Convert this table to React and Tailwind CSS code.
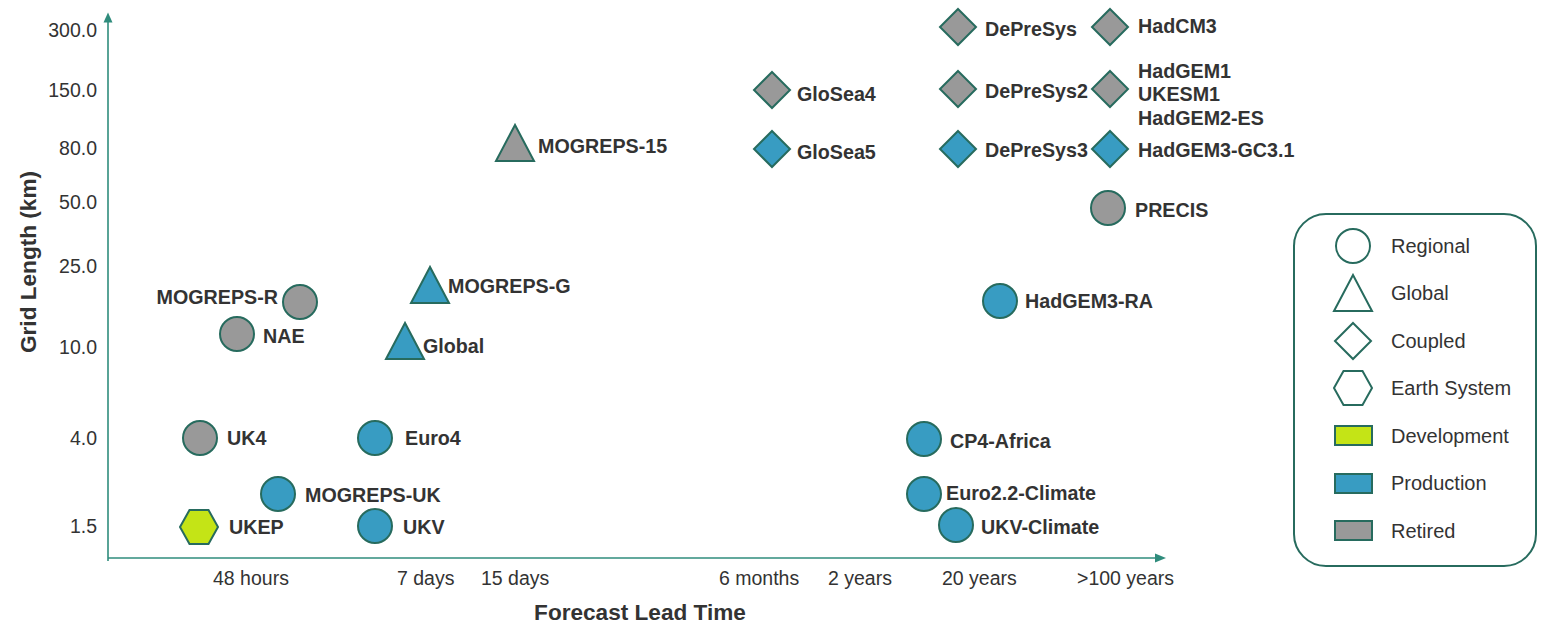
import React from 'react'

const STROKE = '#276b5e'
const AXIS = '#2f8c7c'
const FILL = {
  dev: '#c4e416',
  prod: '#389cc2',
  ret: '#999999',
}

// chart markers: shape, fill, centre
const markers = [
  { s: 'circle', f: 'ret', x: 300, y: 302 },
  { s: 'circle', f: 'ret', x: 237, y: 334 },
  { s: 'circle', f: 'ret', x: 200, y: 438 },
  { s: 'circle', f: 'prod', x: 375, y: 438 },
  { s: 'circle', f: 'prod', x: 278, y: 494 },
  { s: 'hex', f: 'dev', x: 199, y: 527 },
  { s: 'circle', f: 'prod', x: 375, y: 526 },
  { s: 'tri', f: 'prod', x: 405, y: 341 },
  { s: 'tri', f: 'prod', x: 430, y: 285 },
  { s: 'tri', f: 'ret', x: 515, y: 143 },
  { s: 'diamond', f: 'ret', x: 772, y: 90 },
  { s: 'diamond', f: 'prod', x: 772, y: 149 },
  { s: 'diamond', f: 'ret', x: 958, y: 27 },
  { s: 'diamond', f: 'ret', x: 958, y: 89 },
  { s: 'diamond', f: 'prod', x: 958, y: 149 },
  { s: 'diamond', f: 'ret', x: 1110, y: 27 },
  { s: 'diamond', f: 'ret', x: 1110, y: 89 },
  { s: 'diamond', f: 'prod', x: 1110, y: 149 },
  { s: 'circle', f: 'ret', x: 1108, y: 208 },
  { s: 'circle', f: 'prod', x: 1000, y: 301 },
  { s: 'circle', f: 'prod', x: 924, y: 439 },
  { s: 'circle', f: 'prod', x: 924, y: 494 },
  { s: 'circle', f: 'prod', x: 956, y: 525 },
]

const labels = [
  { t: 'MOGREPS-R', x: 278, y: 304, end: true },
  { t: 'NAE', x: 263, y: 343 },
  { t: 'UK4', x: 227, y: 445 },
  { t: 'Euro4', x: 405, y: 445 },
  { t: 'MOGREPS-UK', x: 305, y: 502 },
  { t: 'UKEP', x: 229, y: 534 },
  { t: 'UKV', x: 403, y: 534 },
  { t: 'Global', x: 423, y: 353 },
  { t: 'MOGREPS-G', x: 448, y: 293 },
  { t: 'MOGREPS-15', x: 538, y: 153 },
  { t: 'GloSea4', x: 797, y: 101 },
  { t: 'GloSea5', x: 797, y: 159 },
  { t: 'DePreSys', x: 985, y: 36 },
  { t: 'DePreSys2', x: 985, y: 98 },
  { t: 'DePreSys3', x: 985, y: 157 },
  { t: 'HadCM3', x: 1138, y: 33 },
  { t: 'HadGEM1', x: 1138, y: 78 },
  { t: 'UKESM1', x: 1138, y: 101 },
  { t: 'HadGEM2-ES', x: 1138, y: 125 },
  { t: 'HadGEM3-GC3.1', x: 1138, y: 157 },
  { t: 'PRECIS', x: 1135, y: 217 },
  { t: 'HadGEM3-RA', x: 1025, y: 308 },
  { t: 'CP4-Africa', x: 950, y: 448 },
  { t: 'Euro2.2-Climate', x: 946, y: 500 },
  { t: 'UKV-Climate', x: 981, y: 534 },
]

const yTicks = [
  ['300.0', 37],
  ['150.0', 97],
  ['80.0', 155],
  ['50.0', 209],
  ['25.0', 273],
  ['10.0', 354],
  ['4.0', 445],
  ['1.5', 533],
]

const xTicks = [
  ['48 hours', 213],
  ['7 days', 397],
  ['15 days', 481],
  ['6 months', 719],
  ['2 years', 828],
  ['20 years', 942],
  ['>100 years', 1077],
]

const Shape = ({ s, x, y, fill }) => {
  const common = { fill, stroke: STROKE, strokeWidth: 2, strokeLinejoin: 'miter' }
  switch (s) {
    case 'circle':
      return <circle cx={x} cy={y} r={17} {...common} />
    case 'tri':
      return <polygon points={`${x},${y - 18} ${x - 19},${y + 18} ${x + 19},${y + 18}`} {...common} />
    case 'diamond':
      return <polygon points={`${x},${y - 18} ${x + 18},${y} ${x},${y + 18} ${x - 18},${y}`} {...common} />
    case 'hex':
      return (
        <polygon
          points={`${x - 19},${y} ${x - 9.5},${y - 17} ${x + 9.5},${y - 17} ${x + 19},${y} ${x + 9.5},${y + 17} ${x - 9.5},${y + 17}`}
          {...common}
        />
      )
    default:
      return null
  }
}

const LegendIcon = ({ kind }) => (
  <svg width="42" height="40" viewBox="0 0 42 40">
    <Shape s={kind} x={21} y={20} fill="#ffffff" />
  </svg>
)

const legendItems = [
  { label: 'Regional', shape: 'circle' },
  { label: 'Global', shape: 'tri' },
  { label: 'Coupled', shape: 'diamond' },
  { label: 'Earth System', shape: 'hex' },
  { label: 'Development', color: FILL.dev },
  { label: 'Production', color: FILL.prod },
  { label: 'Retired', color: FILL.ret },
]

const Legend = () => (
  <div className="mt-[213px] ml-[-2px] w-[244px] h-[354px] rounded-[33px] border-2 border-[#276b5e] flex flex-col pt-[7px]">
    {legendItems.map((item) => (
      <div key={item.label} className="h-[47.5px] flex items-center">
        <div className="w-[42px] h-[40px] ml-[37px] flex items-center justify-center">
          {item.shape ? (
            <LegendIcon kind={item.shape} />
          ) : (
            <div
              className="w-[39px] h-[21px] border-2 border-[#276b5e]"
              style={{ backgroundColor: item.color }}
            />
          )}
        </div>
        <span className="ml-[17px] text-[20px] leading-none text-[#333333]">{item.label}</span>
      </div>
    ))}
  </div>
)

const Chart = () => (
  <svg width="1295" height="626" viewBox="0 0 1295 626" className="shrink-0">
    {/* axes */}
    <line x1="108" y1="20" x2="108" y2="561" stroke={AXIS} strokeWidth="1.6" />
    <polygon points="108,12.5 103.5,22.5 112.5,22.5" fill={AXIS} />
    <line x1="108" y1="558" x2="1157" y2="558" stroke={AXIS} strokeWidth="1.6" />
    <polygon points="1166,558 1155,553.5 1155,562.5" fill={AXIS} />

    {/* tick labels */}
    <g className="fill-[#333333]" fontSize="19.5">
      {yTicks.map(([t, y]) => (
        <text key={t} x="97" y={y} textAnchor="end">
          {t}
        </text>
      ))}
      {xTicks.map(([t, x]) => (
        <text key={t} x={x} y="585">
          {t}
        </text>
      ))}
    </g>

    {/* axis titles */}
    <g className="fill-[#333333]" fontSize="22.6" fontWeight="700">
      <text x="640" y="620" textAnchor="middle">
        Forecast Lead Time
      </text>
      <text x="36" y="262" textAnchor="middle" transform="rotate(-90 36 262)">
        Grid Length (km)
      </text>
    </g>

    {/* markers */}
    {markers.map((m, i) => (
      <Shape key={i} s={m.s} x={m.x} y={m.y} fill={FILL[m.f]} />
    ))}

    {/* model labels */}
    <g className="fill-[#333333]" fontSize="19.7" fontWeight="700">
      {labels.map((l) => (
        <text key={l.t} x={l.x} y={l.y} textAnchor={l.end ? 'end' : 'start'}>
          {l.t}
        </text>
      ))}
    </g>
  </svg>
)

export default function App() {
  return (
    <div className="w-[1552px] h-[626px] bg-white flex font-['Liberation_Sans',Arial,sans-serif] overflow-hidden">
      <Chart />
      <Legend />
    </div>
  )
}
